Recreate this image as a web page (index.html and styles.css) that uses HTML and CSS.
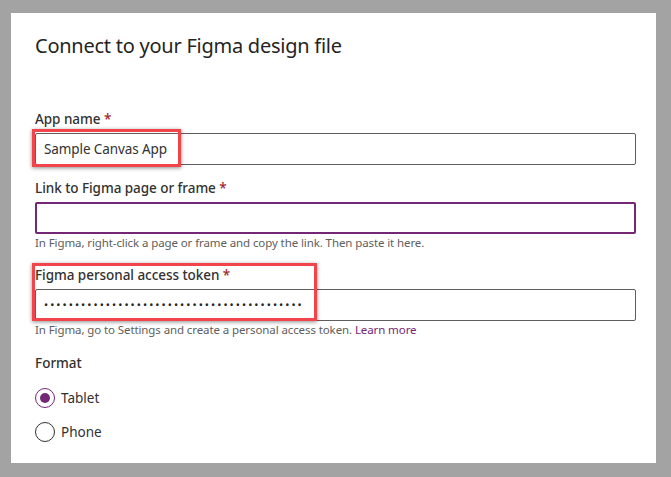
FILE: index.html
```html
<!DOCTYPE html>
<html lang="en">
<head>
<meta charset="utf-8">
<title>Connect to your Figma design file</title>
<link rel="stylesheet" href="styles.css">
</head>
<body>
<div class="panel">
  <h1 class="title">Connect to your Figma design file</h1>

  <div class="field field-first">
    <div class="label">App name <span class="req">*</span></div>
    <div class="input">Sample Canvas App</div>
    <div class="callout callout-name"></div>
  </div>

  <div class="field field-link">
    <div class="label">Link to Figma page or frame <span class="req">*</span></div>
    <div class="input input-focus"></div>
    <div class="help">In Figma, right-click a page or frame and copy the link. Then paste it here.</div>
  </div>

  <div class="field field-token">
    <div class="label">Figma personal access token <span class="req">*</span></div>
    <div class="input input-dots">••••••••••••••••••••••••••••••••••••••••••</div>
    <div class="help">In Figma, go to Settings and create a personal access token. <span class="link">Learn more</span></div>
    <div class="callout callout-token"></div>
  </div>

  <div class="format">
    <div class="format-label">Format</div>
    <div class="radio-row"><span class="radio radio-checked"></span><span class="radio-text">Tablet</span></div>
    <div class="radio-row"><span class="radio"></span><span class="radio-text">Phone</span></div>
  </div>
</div>
</body>
</html>
```

FILE: styles.css
```css
html, body {
  margin: 0;
  padding: 0;
  background: #a3a3a3;
}
body {
  width: 671px;
  height: 477px;
  overflow: hidden;
  font-family: "Noto Sans", "Open Sans", "Liberation Sans", sans-serif;
  color: #323130;
}
.panel {
  box-sizing: border-box;
  margin: 13px 0 0 11px;
  width: 645px;
  height: 450px;
  background: #ffffff;
  padding: 19px 20px 0 24px;
}
.title {
  margin: 0;
  font-size: 20px;
  font-weight: 400;
  line-height: 28px;
  color: #252423;
  letter-spacing: -0.25px;
}
.field {
  position: relative;
}
.field-first {
  margin-top: 49px;
}
.field-link {
  margin-top: 13px;
}
.field-token {
  margin-top: 14px;
}
.label {
  font-size: 13.5px;
  font-weight: 500;
  line-height: 20px;
  height: 20px;
  margin-bottom: 4px;
  letter-spacing: -0.05px;
}
.req {
  color: #a4262c;
}
.input {
  box-sizing: border-box;
  height: 32px;
  border: 1px solid #605e5c;
  border-radius: 2px;
  padding: 0 8px;
  font-size: 13.5px;
  line-height: 30px;
  color: #323130;
  letter-spacing: -0.1px;
}
.input-focus {
  border: 2px solid #742774;
}
.input-dots {
  font-size: 11px;
  letter-spacing: 2.05px;
  padding-left: 8px;
  color: #252423;
  white-space: nowrap;
  overflow: hidden;
}
.help {
  font-size: 11.5px;
  line-height: 16px;
  height: 16px;
  color: #605e5c;
  margin-top: 1px;
  letter-spacing: -0.1px;
}
.link {
  color: #742774;
}
.callout {
  position: absolute;
  box-sizing: border-box;
  border: 3px solid #f2454b;
  box-shadow: 0 1px 4px rgba(0, 0, 0, 0.45);
  pointer-events: none;
}
.callout-name {
  left: -3px;
  top: 20px;
  width: 149px;
  height: 38px;
}
.callout-token {
  left: -3px;
  top: -2px;
  width: 285px;
  height: 58px;
}
.format {
  margin-top: 15px;
}
.format-label {
  font-size: 13.5px;
  font-weight: 500;
  line-height: 20px;
  margin-bottom: 15px;
}
.radio-row {
  display: flex;
  align-items: center;
  height: 20px;
  margin-bottom: 14px;
}
.radio {
  box-sizing: border-box;
  width: 20px;
  height: 20px;
  border: 1px solid #323130;
  border-radius: 50%;
  display: flex;
  align-items: center;
  justify-content: center;
  margin-right: 6px;
}
.radio-checked {
  border-color: #742774;
}
.radio-checked::after {
  content: "";
  width: 10px;
  height: 10px;
  border-radius: 50%;
  background: #742774;
}
.radio-text {
  font-size: 13.5px;
  line-height: 20px;
}
```
